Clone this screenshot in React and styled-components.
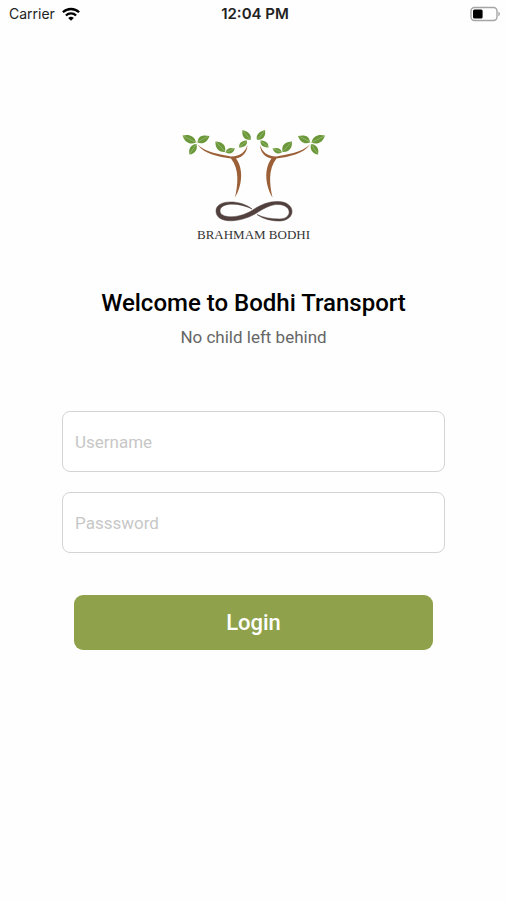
import React from "react";
import styled, { createGlobalStyle } from "styled-components";

const GlobalStyle = createGlobalStyle`
  * {
    box-sizing: border-box;
  }

  body {
    margin: 0;
    background: #fefefe;
    font-family: Roboto, "Liberation Sans", sans-serif;
  }
`;

const StatusBar = styled.header`
  display: grid;
  grid-template-columns: 1fr auto 1fr;
  align-items: center;
  height: 27px;
  padding: 0 6px 0 9px;
  font-family: Inter, "Liberation Sans", sans-serif;
  font-size: 14px;
  color: #222;

  svg {
    display: block;
  }
`;

const Carrier = styled.div`
  display: flex;
  align-items: center;
  gap: 7px;
`;

const Clock = styled.time`
  font-size: 15px;
  font-weight: 600;
`;

const Battery = styled.div`
  justify-self: end;
`;

const Main = styled.main`
  display: flex;
  flex-direction: column;
  align-items: center;
  padding: 88px 62px 40px;
`;

const Brand = styled.figure`
  display: flex;
  flex-direction: column;
  align-items: center;
  margin: 0;

  svg {
    display: block;
  }

  figcaption {
    font-family: "Liberation Serif", serif;
    font-size: 13px;
    line-height: 20px;
    color: #333;
  }
`;

const Title = styled.h1`
  margin: 42px 0 0;
  font-size: 24px;
  font-weight: 500;
  line-height: 32px;
  color: #000;
`;

const Tagline = styled.p`
  margin: 6px 0 0;
  font-size: 17px;
  line-height: 24px;
  color: #666;
`;

const Form = styled.form`
  display: flex;
  flex-direction: column;
  gap: 20px;
  width: 100%;
  margin-top: 62px;
`;

const Input = styled.input`
  width: 100%;
  height: 61px;
  padding: 0 12px;
  border: 1px solid #d4d4d4;
  border-radius: 8px;
  background: #fff;
  font-family: inherit;
  font-size: 17px;
  color: #222;

  &::placeholder {
    color: #c7c7c7;
    opacity: 1;
  }
`;

const Button = styled.button`
  height: 55px;
  margin: 22px 12px 0;
  border: 0;
  border-radius: 9px;
  background: #8fa24b;
  color: #fff;
  font-family: inherit;
  font-size: 22px;
  font-weight: 500;
`;

const WifiIcon = () => (
  <svg width="18" height="14" viewBox="0 0 18 14" aria-hidden="true">
    <g fill="none" stroke="#000" strokeWidth="2.3">
      <path d="M0.9 5.3a11.6 11.6 0 0 1 16.2 0" />
      <path d="M3.9 8.5a7.3 7.3 0 0 1 10.2 0" />
    </g>
    <path d="M9 13.8 6.2 11a4 4 0 0 1 5.6 0z" />
  </svg>
);

const BatteryIcon = () => (
  <svg width="31" height="16" viewBox="0 0 31 16" aria-hidden="true">
    <rect x="1" y="1.5" width="26" height="13" rx="3.5" fill="#fff" stroke="#a5a5a5" strokeWidth="1.4" />
    <rect x="3" y="3.4" width="9.6" height="9.2" rx="1.5" />
    <path d="M28.4 5.8c2 .6 2 3.8 0 4.4z" fill="#a5a5a5" />
  </svg>
);

const leaves = [
  "M2.500 20.500C8 19 14.500 20 16 27.500C10 30.500 4.500 27 2.500 20.500z",
  "M17.500 27.500C18 20.500 23 19.500 29.500 21C27 27.500 23 29.500 17.500 27.500z",
  "M16.500 29C18 35 14.500 39 9.500 39.500C8 33.500 11 29.500 16.500 29z",
  "M35.500 26.500C42 26.500 46.500 30 45 37C38.500 37.500 35 33 35.500 26.500z",
  "M45.500 37.500C47 32.500 50.500 32.500 55 33.500C53 38.500 50 39.500 45.500 37.500z",
  "M62.500 15C68.500 16.500 72 20 70.500 25C64 25 61.500 21 62.500 15z",
  "M67 25.500C67.500 30.500 64 32.500 59 32.500C59 27.500 62 25.500 67 25.500z",
];

const veins =
  "M3 21l13 6.500l12-6M16.500 29l-6.500 9.500M36 27l9 9.500M45.500 37.500l9-4M63 16l7.500 9M67 26l-8 6";

const Tree = () => (
  <>
    <path
      d="M17.500 29.500C26 38 42 39.500 51 41.500C61 41 65 37 67.500 30C67 39 61 42.500 56 43.500C64 54 62 71 55 82.500C58 69 59.500 54 51 43.500C38 41.500 25 39.500 17.500 29.500z"
      fill="#9b6038"
    />
    {leaves.map((d) => (
      <path key={d} d={d} fill="#6a983b" />
    ))}
    <path d={veins} fill="none" stroke="#b9cf91" strokeWidth=".5" />
  </>
);

const Logo = () => (
  <svg width="148" height="110" viewBox="0 0 148 110" aria-hidden="true">
    <Tree />
    <g transform="translate(147.500 0) scale(-1 1)">
      <Tree />
    </g>
    <path
      d="M72 94C62 85 36 83.500 36 96C36 108.500 58 108.500 75 99C86 92 91 89.500 98 89.500C112 89.500 113 103.500 100 104C91 104 83 102.500 77 99.500C84 104.500 92 106 100 106C117 105 116 86 97 86.500C88 86.500 80 90 72 95.500C57 104.500 40 103 40 96C40 87.500 58 87 72 94z"
      fill="#51403d"
      stroke="#51403d"
      strokeWidth=".5"
    />
  </svg>
);

export default function App() {
  return (
    <div>
      <GlobalStyle />
      <StatusBar>
        <Carrier>
          Carrier
          <WifiIcon />
        </Carrier>
        <Clock>12:04 PM</Clock>
        <Battery>
          <BatteryIcon />
        </Battery>
      </StatusBar>
      <Main>
        <Brand>
          <Logo />
          <figcaption>BRAHMAM BODHI</figcaption>
        </Brand>
        <Title>Welcome to Bodhi Transport</Title>
        <Tagline>No child left behind</Tagline>
        <Form onSubmit={(e) => e.preventDefault()}>
          <Input type="text" placeholder="Username" aria-label="Username" />
          <Input type="password" placeholder="Passsword" aria-label="Passsword" />
          <Button type="submit">Login</Button>
        </Form>
      </Main>
    </div>
  );
}
